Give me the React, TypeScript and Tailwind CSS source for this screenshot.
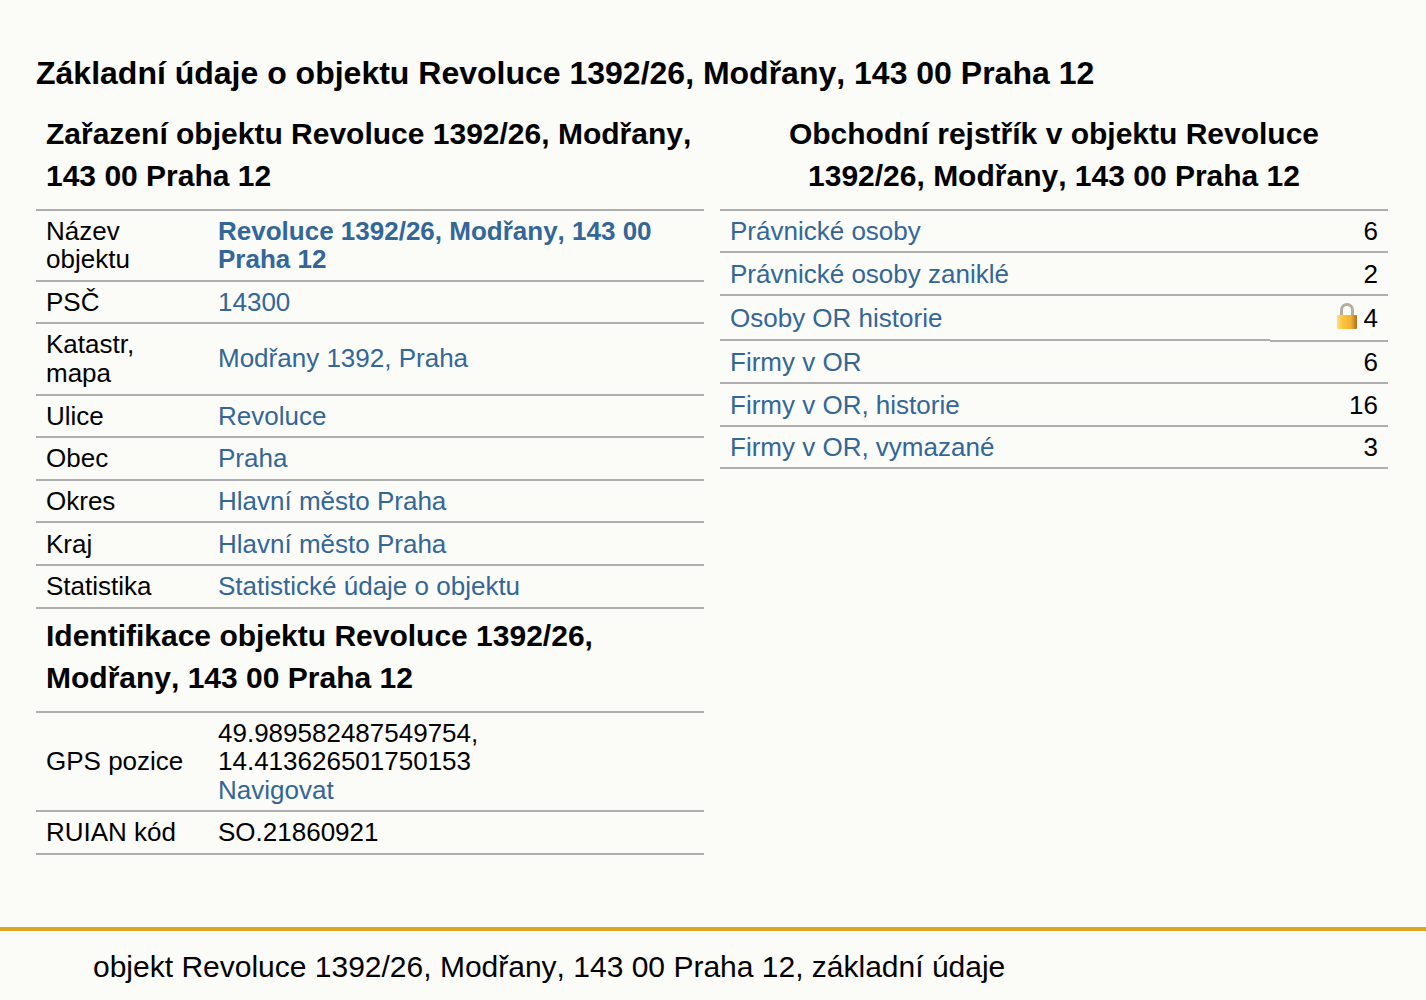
const F = "font-['Liberation_Sans',Arial,sans-serif]";
const link = "text-[#336699]";
const line = "border-[#aeaeae]";
const left = [
  ["Název objektu", "Revoluce 1392/26, Modřany, 143 00 Praha 12", true],
  ["PSČ", "14300"],
  ["Katastr, mapa", "Modřany 1392, Praha"],
  ["Ulice", "Revoluce"],
  ["Obec", "Praha"],
  ["Okres", "Hlavní město Praha"],
  ["Kraj", "Hlavní město Praha"],
  ["Statistika", "Statistické údaje o objektu"],
] as const;
const right = [
  ["Právnické osoby", "6", "h-[42px]"],
  ["Právnické osoby zaniklé", "2", "h-[43px]"],
  ["Osoby OR historie", "4", ""],
  ["Firmy v OR", "6", "h-[42px]"],
  ["Firmy v OR, historie", "16", "h-[43px]"],
  ["Firmy v OR, vymazané", "3", "h-[42px]"],
];
function Lock() {
  return (
    <svg width="22" height="27" viewBox="0 0 22 27" className="shrink-0 mr-[6px] mb-[3px]">
      <defs>
        <linearGradient id="lk" x1="0" x2="1" y1="0" y2="0">
          <stop offset="0" stopColor="#fbe08e" />
          <stop offset="0.25" stopColor="#fcc63e" />
          <stop offset="0.7" stopColor="#f2b032" />
          <stop offset="1" stopColor="#a87420" />
        </linearGradient>
      </defs>
      <path d="M5.5 13V7a5.5 5.5 0 0 1 11 0v6" fill="none" stroke="#b8ac9a" strokeWidth="3" />
      <rect x="1" y="12" width="20" height="14" rx="1" fill="url(#lk)" />
    </svg>
  );
}
export default function App() {
  return (
    <div className={`${F} h-[1000px] bg-[#fbfbf8] text-black text-[26px] flex flex-col overflow-hidden`}>
      <div className="flex-1 px-9 pt-[53px]">
        <h1 className="text-[32px] leading-[40px] font-bold [font-kerning:none]">Základní údaje o objektu Revoluce 1392/26, Modřany, 143 00 Praha 12</h1>
        <div className="flex gap-4 mt-[20px]">
          <div className="w-[668px]">
            <h2 className="text-[30px] leading-[42px] font-bold px-[10px] pb-[12px] [font-kerning:none]">Zařazení objektu Revoluce 1392/26, Modřany, 143 00 Praha 12</h2>
            <div className={`border-t-2 ${line}`}>
              {left.map((r) => (
                <div key={r[0]} className={`flex items-center border-b-2 ${line} ${r[0] === "Katastr, mapa" ? "leading-[29px] py-[5.7px]" : "leading-[28px] py-[6.3px]"}`}>
                  <div className="w-[182px] px-[10px] pr-[40px] shrink-0">{r[0]}</div>
                  <div className={`${link} ${r[2] ? "font-bold [font-kerning:none]" : ""}`}>{r[1]}</div>
                </div>
              ))}
            </div>
            <h2 className="text-[30px] leading-[42px] font-bold px-[10px] pt-[6px] pb-[12px] [font-kerning:none]">Identifikace objektu Revoluce 1392/26, Modřany, 143 00 Praha 12</h2>
            <div className={`border-t-2 ${line}`}>
              <div className={`flex items-center border-b-2 ${line} leading-[28.5px] py-[6px]`}>
                <div className="w-[182px] px-[10px] shrink-0">GPS pozice</div>
                <div>49.989582487549754,<br />14.413626501750153<br /><span className={link}>Navigovat</span></div>
              </div>
              <div className={`flex items-center border-b-2 ${line} leading-[28px] py-[6.33px]`}>
                <div className="w-[182px] px-[10px] shrink-0">RUIAN kód</div>
                <div>SO.21860921</div>
              </div>
            </div>
          </div>
          <div className="w-[668px]">
            <h2 className="text-[30px] leading-[42px] font-bold text-center px-[10px] pb-[12px] [font-kerning:none]">Obchodní rejstřík v objektu Revoluce 1392/26, Modřany, 143 00 Praha 12</h2>
            <div className={`border-t-2 ${line}`}>
              {right.map((r) =>
                r[1] === "4" ? (
                  <div key={r[0]} className="flex items-start leading-[28px]">
                    <div className={`flex-1 h-[45px] flex items-center px-[10px] border-b-2 ${line}`}>
                      <span className={link}>{r[0]}</span>
                    </div>
                    <div className={`w-[118px] h-[46px] flex items-center justify-end px-[10px] border-b-2 ${line}`}>
                      <Lock />{r[1]}
                    </div>
                  </div>
                ) : (
                  <div key={r[0]} className={`flex items-center justify-between border-b-2 ${line} leading-[28px] ${r[2]} px-[10px]`}>
                    <span className={link}>{r[0]}</span>
                    <span>{r[1]}</span>
                  </div>
                )
              )}
            </div>
          </div>
        </div>
      </div>
      <div className="h-[73px] border-t-4 border-[#daa520] pl-[93px] pt-[18px] text-[30px] leading-[36px] [font-kerning:none]">objekt Revoluce 1392/26, Modřany, 143 00 Praha 12, základní údaje</div>
    </div>
  );
}
